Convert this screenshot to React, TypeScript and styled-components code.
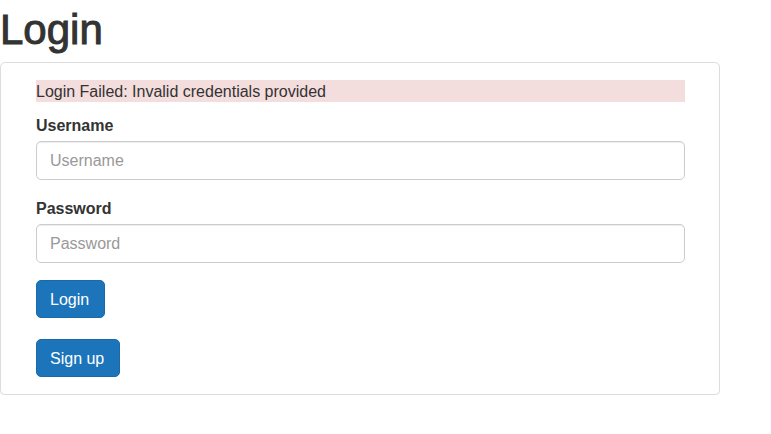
import React from "react";
import styled, { createGlobalStyle } from "styled-components";

const GlobalStyle = createGlobalStyle`
  *, *::before, *::after { box-sizing: border-box; }
  body {
    margin: 0;
    background: #fff;
    color: #333;
    font: 16px/22px "Liberation Sans", Arial, sans-serif;
  }
`;

const Page = styled.main`
  padding-right: 51px;
`;

const Title = styled.h1`
  margin: 0 0 10px;
  padding-top: 8px;
  font-size: 42px;
  font-weight: 500;
  line-height: 44px;
  -webkit-text-stroke: 1px currentColor;
`;

const Panel = styled.section`
  padding: 17px 34px 17px 35px;
  border: 1px solid #ddd;
  border-radius: 5px;
  background: #fff;
  box-shadow: 0 1px 1px rgba(0, 0, 0, 0.05);
`;

const Alert = styled.div`
  margin-bottom: 12px;
  padding-top: 2px;
  background: #f4dddd;
  line-height: 20px;
`;

const Field = styled.div`
  margin-bottom: 17px;
`;

const Label = styled.label`
  display: block;
  margin-bottom: 4px;
  padding-top: 1px;
  font-weight: 700;
`;

const TextInput = styled.input`
  display: block;
  width: 100%;
  height: 39px;
  padding: 6px 13px;
  border: 1px solid #ccc;
  border-radius: 5px;
  background: #fff;
  box-shadow: inset 0 1px 1px rgba(0, 0, 0, 0.075);
  color: #555;
  font: inherit;
  &::placeholder { color: #999; opacity: 1; }
`;

const Actions = styled.div`
  display: flex;
  flex-direction: column;
  align-items: flex-start;
  gap: 21px;
`;

const Button = styled.button`
  height: 38px;
  padding: 2px 15px 0 13px;
  border: 1px solid #1b69a7;
  border-radius: 5px;
  background: #1c75bb;
  color: #fff;
  font: inherit;
  cursor: pointer;
`;

export default function App() {
  return (
    <Page>
      <GlobalStyle />
      <Title>Login</Title>
      <Panel>
        <Alert role="alert">Login Failed: Invalid credentials provided</Alert>
        <form onSubmit={(event) => event.preventDefault()}>
          <Field>
            <Label htmlFor="username">Username</Label>
            <TextInput id="username" type="text" placeholder="Username" />
          </Field>
          <Field>
            <Label htmlFor="password">Password</Label>
            <TextInput id="password" type="password" placeholder="Password" />
          </Field>
          <Actions>
            <Button type="submit">Login</Button>
            <Button type="button">Sign up</Button>
          </Actions>
        </form>
      </Panel>
    </Page>
  );
}
